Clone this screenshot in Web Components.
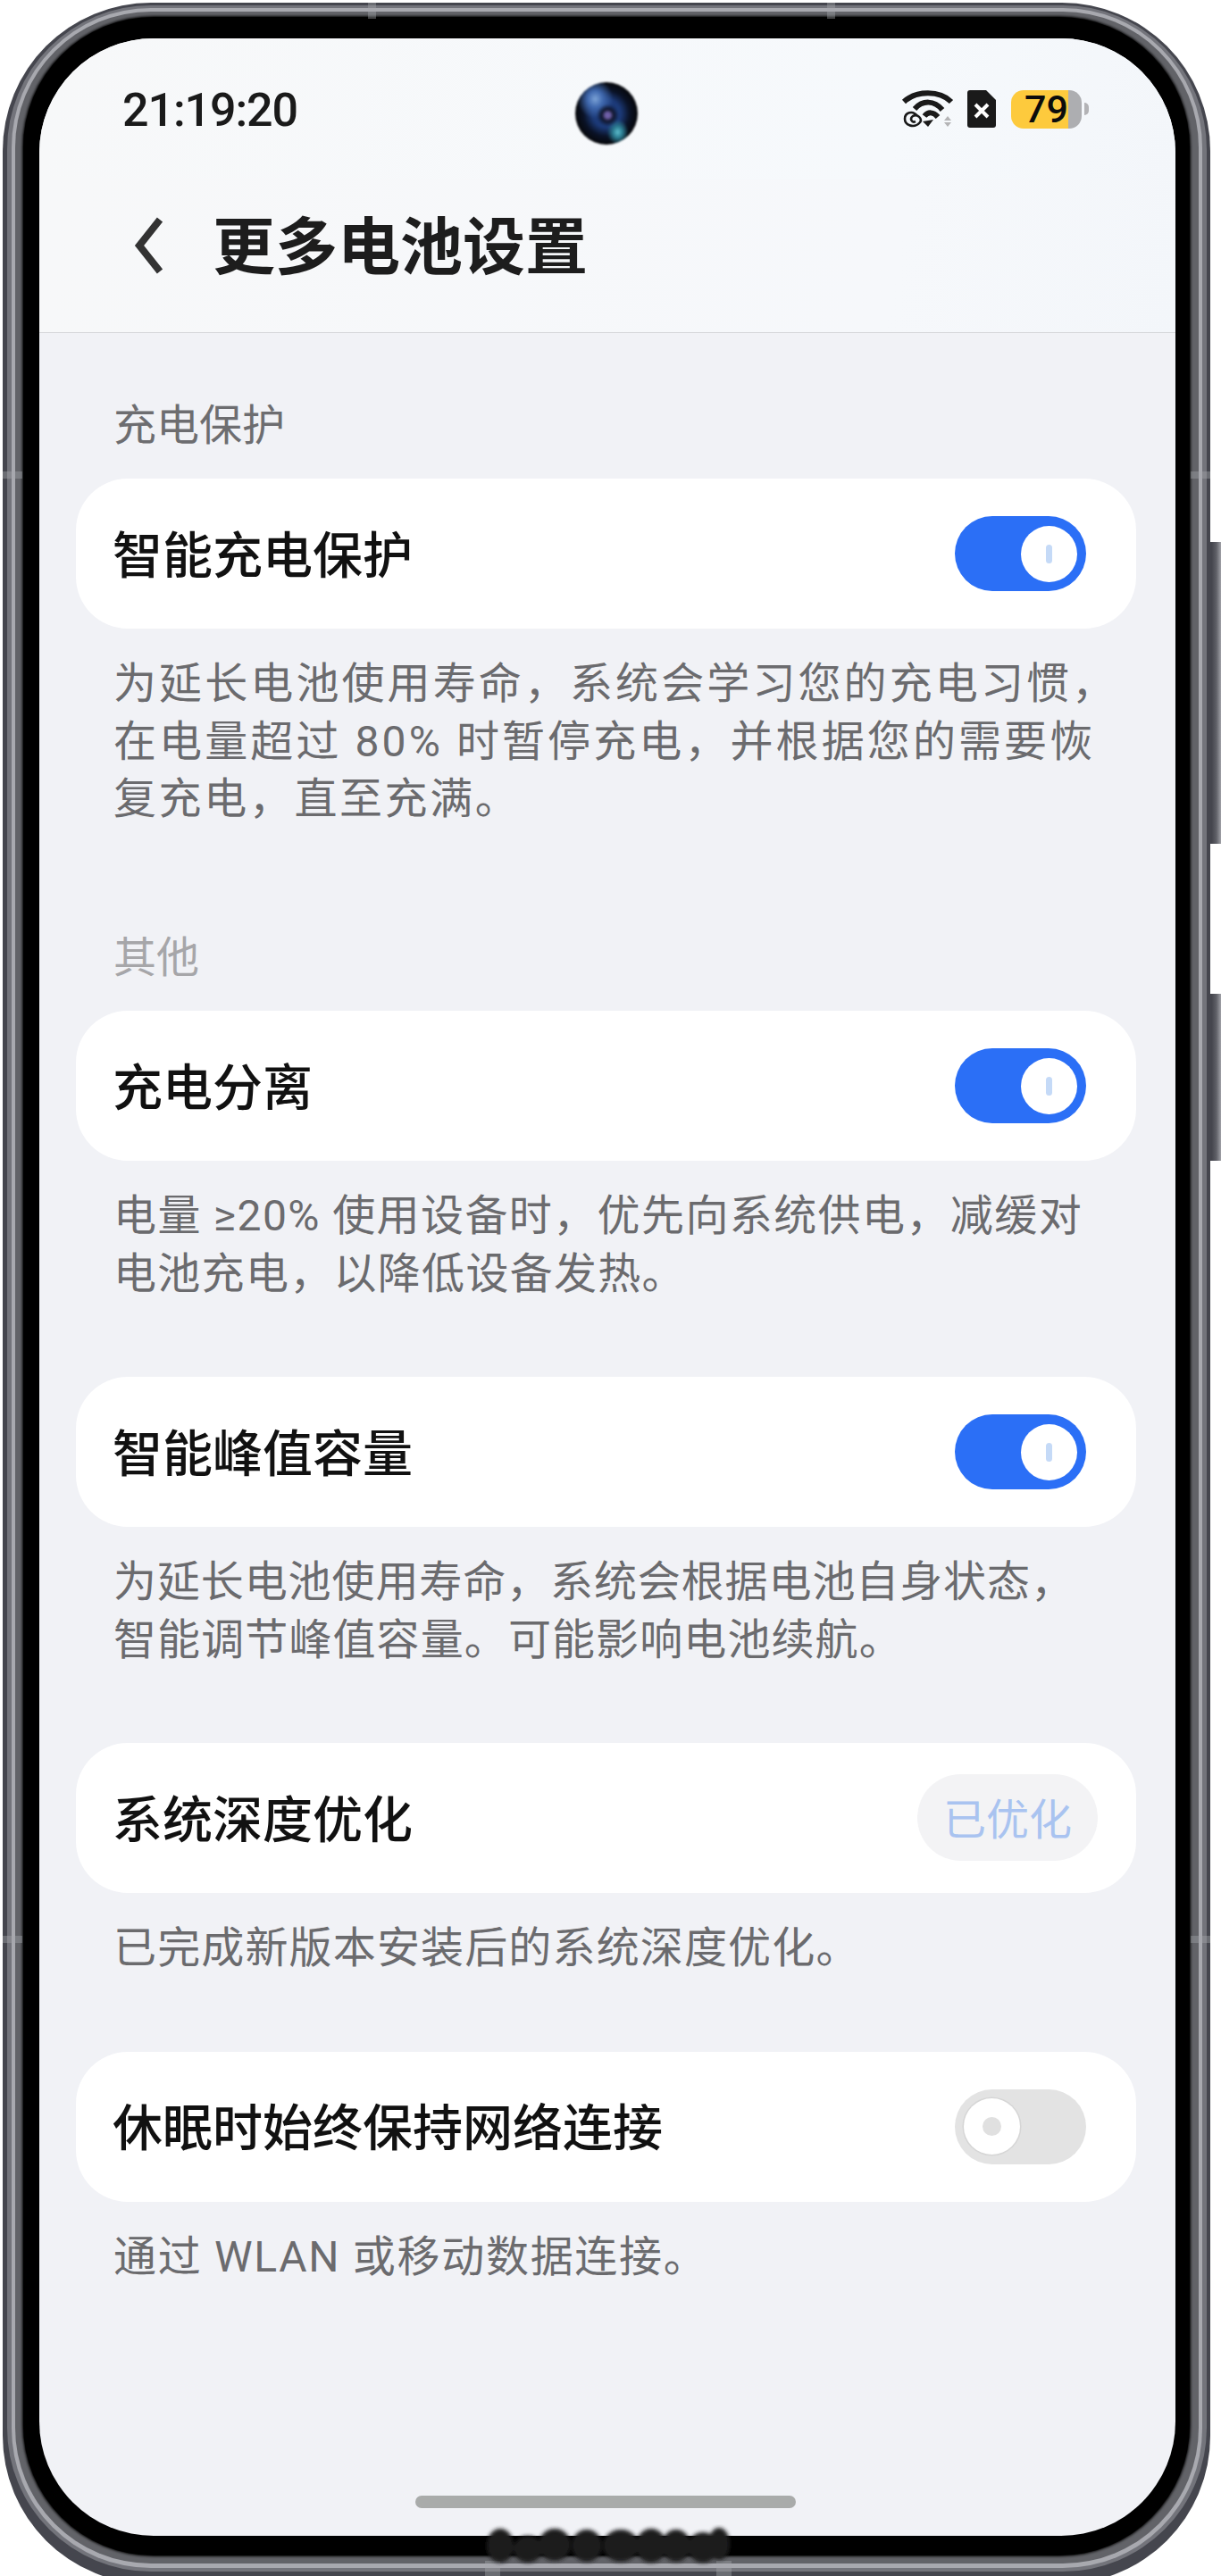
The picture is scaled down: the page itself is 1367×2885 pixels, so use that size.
<!DOCTYPE html>
<html lang="zh">
<head>
<meta charset="utf-8">
<title>更多电池设置</title>
<style>
html, body { margin: 0; background: #fff; }
body { font-family: "Noto Sans CJK SC", "Noto Sans", sans-serif; }
</style>
</head>
<body>
<phone-frame>
  <status-bar time="21:19:20" battery="79"></status-bar>
  <app-header title="更多电池设置"></app-header>
  <settings-list>
    <section-label>充电保护</section-label>
    <setting-row label="智能充电保护"><toggle-switch on></toggle-switch></setting-row>
    <setting-note>
      <note-line style="letter-spacing:3.1px">为延长电池使用寿命，系统会学习您的充电习惯，</note-line>
      <note-line style="letter-spacing:3.1px">在电量超过 80% 时暂停充电，并根据您的需要恢</note-line>
      <note-line style="letter-spacing:2.6px">复充电，直至充满。</note-line>
    </setting-note>
    <section-label class="muted">其他</section-label>
    <setting-row label="充电分离"><toggle-switch on></toggle-switch></setting-row>
    <setting-note>
      <note-line style="letter-spacing:1.4px">电量 ≥20% 使用设备时，优先向系统供电，减缓对</note-line>
      <note-line style="letter-spacing:1.3px">电池充电，以降低设备发热。</note-line>
    </setting-note>
    <setting-row class="next" label="智能峰值容量"><toggle-switch on></toggle-switch></setting-row>
    <setting-note>
      <note-line style="letter-spacing:.9px">为延长电池使用寿命，系统会根据电池自身状态，</note-line>
      <note-line style="letter-spacing:1.1px">智能调节峰值容量。可能影响电池续航。</note-line>
    </setting-note>
    <setting-row class="next" label="系统深度优化"><state-pill>已优化</state-pill></setting-row>
    <setting-note>
      <note-line style="letter-spacing:1.15px">已完成新版本安装后的系统深度优化。</note-line>
    </setting-note>
    <setting-row class="next" label="休眠时始终保持网络连接"><toggle-switch></toggle-switch></setting-row>
    <setting-note>
      <note-line style="letter-spacing:1.7px">通过 WLAN 或移动数据连接。</note-line>
    </setting-note>
  </settings-list>
  <home-bar></home-bar>
</phone-frame>

<script>
class PhoneFrame extends HTMLElement {
    constructor() {
        super();
        this.attachShadow({ mode: "open" });
        this.shadowRoot.innerHTML = `
        <style>
        :host { display: block; position: relative; width: 1367px; height: 2885px; overflow: hidden; background: #fff; }
        .r0 { width: 1352px; margin-left: 3px; margin-top: 3px; box-sizing: border-box; padding: 3px 4px 14px 5px; border-radius: 166px; background: #45464e; position: relative; z-index: 1; }
        .r1 { padding: 3px 5px 4px 5px; border-radius: 161px; background: #73747b; }
        .r2 { padding: 4px 4px 5px 4px; border-radius: 156px; background: #a8a9af; }
        .r3 { padding: 6px 10px 9px 9px; border-radius: 152px; background: #626368; }
        .r4 { padding: 24px 16px 22px 18px; border-radius: 146px; background: #000; box-shadow: 0 0 3px 1px #000; }
        .screen { height: 2797px; border-radius: 128px; overflow: hidden; background: #f1f2f6; display: flex; flex-direction: column; }
        .btn { position: absolute; left: 1350px; width: 17px; border-radius: 5px 0 0 5px / 8px; background: linear-gradient(90deg, #45464e 0 40%, #606168 70%, #a0a1a7); }
        .b1 { top: 607px; height: 338px; }
        .b2 { top: 1113px; height: 187px; }
        .tick { position: absolute; background: #a6a7ad; opacity: .4; z-index: 2; }
        .lens { position: absolute; left: 644px; top: 92px; width: 70px; height: 70px; border-radius: 50%; z-index: 3; filter: blur(1px);
            background:
                radial-gradient(circle at 52% 53%, #6f5fa8 0 5%, #10162c 13%, transparent 24%),
                radial-gradient(ellipse at 32% 27%, #7ba2d6 0, #3f68ae 13%, transparent 30%),
                radial-gradient(ellipse at 68% 80%, #5dbccb 0, #2b7b90 8%, transparent 18%),
                radial-gradient(circle, #1c3a78 0 32%, #0a1226 52%, #050505 74%); }
        svg.port { position: absolute; left: 535px; top: 2824px; z-index: 3; }
        </style>
        <div class="btn b1"></div>
        <div class="btn b2"></div>
        <div class="r0"><div class="r1"><div class="r2"><div class="r3"><div class="r4">
            <div class="screen"><slot></slot></div>
        </div></div></div></div></div>
        <span class="tick" style="left:412px;top:3px;width:9px;height:18px"></span>
        <span class="tick" style="left:926px;top:3px;width:9px;height:18px"></span>
        <span class="tick" style="left:3px;top:528px;width:22px;height:8px"></span>
        <span class="tick" style="left:1333px;top:528px;width:22px;height:8px"></span>
        <span class="tick" style="left:3px;top:2168px;width:22px;height:8px"></span>
        <span class="tick" style="left:1333px;top:2168px;width:22px;height:8px"></span>
        <span class="tick" style="left:543px;top:2868px;width:17px;height:17px"></span>
        <span class="tick" style="left:802px;top:2868px;width:17px;height:17px"></span>
        <div class="lens"></div>
        <svg class="port" width="292" height="52" viewBox="0 0 292 52">
            <defs><filter id="soft"><feGaussianBlur stdDeviation="2"/></filter></defs>
            <g fill="#1b1b1d" filter="url(#soft)">
                <ellipse cx="25" cy="27" rx="15" ry="19"/><ellipse cx="56" cy="31" rx="16" ry="15"/>
                <ellipse cx="86" cy="26" rx="18" ry="18"/><ellipse cx="122" cy="27" rx="17" ry="18"/>
                <ellipse cx="160" cy="27" rx="20" ry="18"/><ellipse cx="194" cy="27" rx="17" ry="19"/>
                <ellipse cx="222" cy="27" rx="16" ry="18"/><ellipse cx="252" cy="29" rx="17" ry="17"/>
                <ellipse cx="270" cy="25" rx="12" ry="18"/>
            </g>
        </svg>`;
    }
}

class StatusBar extends HTMLElement {
    constructor() {
        super();
        this.attachShadow({ mode: "open" });
        this.shadowRoot.innerHTML = `
        <style>
        :host { display: flex; align-items: center; height: 158px; padding: 0 97px 0 93px; background: linear-gradient(100deg, #f7f8f9, #f6f9fc 75%, #f3f6fa); color: #1a1a1a; flex: none; }
        .time { font: 500 52px/1 Roboto, "Noto Sans", sans-serif; letter-spacing: -1.1px; flex: 1; padding-top: 4px; }
        .wifi { margin-right: 7px; }
        .sim { margin-right: 17px; }
        .batt { display: flex; align-items: center; gap: 3px; }
        .cell { width: 79px; height: 43px; border-radius: 14px; display: flex; align-items: center; justify-content: flex-end;
            background: linear-gradient(90deg, #fdca3d 0 64px, #adaeb1 64px); font: 500 43px/43px Roboto, "Noto Sans", sans-serif; color: #0c0c0c; padding-right: 15px; box-sizing: border-box; }
        .nub { width: 5px; height: 14px; background: #b3b3b6; border-radius: 0 7px 7px 0; }
        </style>
        <span class="time"></span>
        <svg class="wifi" width="68" height="44" viewBox="6 30 68 44" fill="none" stroke="#1a1a1a">
            <path d="M10 44 C 24 31, 50 31, 63 44" stroke-width="6"/>
            <path d="M22 52 C 31 42, 44 42, 53 53" stroke-width="6"/>
            <path d="M33 60 C 37 55, 43 55, 48 61" stroke-width="6"/>
            <path d="M37 72 L31 66 L43 64 Z" fill="#1a1a1a" stroke="none"/>
            <path d="M25 60 C 20 53, 11 56, 11 63 C 11 71, 22 74, 28 67 C 31 63, 25 57, 20 60 C 16 63, 19 68, 23 66" stroke-width="2.6"/>
            <path d="M59 60 L63 65 L55 65 Z M55 67 L63 67 L59 72 Z" fill="#b4b4b6" stroke="none"/>
        </svg>
        <svg class="sim" width="32" height="42" viewBox="0 0 32 42">
            <path d="M3 0 H21 L32 11 V39 a3 3 0 0 1 -3 3 H3 a3 3 0 0 1 -3 -3 V3 a3 3 0 0 1 3 -3 Z" fill="#1a1a1a"/>
            <path d="M9 16 L23 30 M23 16 L9 30" stroke="#fff" stroke-width="4"/>
        </svg>
        <div class="batt"><span class="cell"></span><span class="nub"></span></div>`;
    }

    connectedCallback() {
        this.shadowRoot.querySelector(".time").textContent = this.getAttribute("time");
        this.shadowRoot.querySelector(".cell").textContent = this.getAttribute("battery");
    }
}

class AppHeader extends HTMLElement {
    constructor() {
        super();
        this.attachShadow({ mode: "open" });
        this.shadowRoot.innerHTML = `
        <style>
        :host { display: flex; align-items: center; gap: 55px; height: 148px; padding: 0 0 23px 106px; background: linear-gradient(100deg, #f7f8f9, #f6f8fb 75%, #f3f6fa); border-bottom: 1px solid #d5d6d9; flex: none; }
        h1 { margin: 0 0 6px; font: 700 70px/1.2 "Noto Sans CJK SC", sans-serif; color: #1d1d1d; }
        </style>
        <svg width="33" height="64" viewBox="0 0 33 64" fill="none"><path d="M29 3 L6 32 L29 61" stroke="#333" stroke-width="8"/></svg>
        <h1></h1>`;
    }

    connectedCallback() {
        this.shadowRoot.querySelector("h1").textContent = this.getAttribute("title");
    }
}

class SettingsList extends HTMLElement {
    constructor() {
        super();
        this.attachShadow({ mode: "open" });
        this.shadowRoot.innerHTML = `
        <style>
        :host { display: flex; flex-direction: column; padding: 70px 44px 0 41px; flex: 1; }
        ::slotted(section-label.muted) { margin-top: 112.5px; color: #a6a6a9; }
        ::slotted(setting-row.next) { margin-top: 84px; }
        </style>
        <slot></slot>`;
    }
}

class SectionLabel extends HTMLElement {
    constructor() {
        super();
        this.attachShadow({ mode: "open" });
        this.shadowRoot.innerHTML = `
        <style>
        :host { display: block; padding: 0 0 5px 42px; margin-bottom: 29px; font: 400 48px/59px "Noto Sans CJK SC", sans-serif; color: #6d6d70; }
        </style>
        <slot></slot>`;
    }
}

class SettingRow extends HTMLElement {
    constructor() {
        super();
        this.attachShadow({ mode: "open" });
        this.shadowRoot.innerHTML = `
        <style>
        :host { display: flex; align-items: center; justify-content: space-between; height: 168px; box-sizing: border-box; padding: 0 43px 0 41px; background: #fff; border-radius: 58px; }
        .label { font: 500 56px/1.2 "Noto Sans CJK SC", sans-serif; color: #111; margin-bottom: 5px; }
        </style>
        <span class="label"></span>
        <slot></slot>`;
    }

    connectedCallback() {
        this.shadowRoot.querySelector(".label").textContent = this.getAttribute("label");
    }
}

class SettingNote extends HTMLElement {
    constructor() {
        super();
        this.attachShadow({ mode: "open" });
        this.shadowRoot.innerHTML = `
        <style>
        :host { display: block; padding-left: 42px; margin: 30px 0 -1px; font: 400 48px/64.5px Roboto, "Noto Sans CJK SC", sans-serif; color: #6b6b6e; white-space: nowrap; }
        </style>
        <slot></slot>`;
    }
}

class NoteLine extends HTMLElement {
    constructor() {
        super();
        this.attachShadow({ mode: "open" });
        this.shadowRoot.innerHTML = `
        <style>
        :host { display: block; }
        </style>
        <slot></slot>`;
    }
}

class ToggleSwitch extends HTMLElement {
    constructor() {
        super();
        this.attachShadow({ mode: "open" });
        this.shadowRoot.innerHTML = `
        <style>
        :host { display: flex; align-items: center; width: 147px; height: 84px; margin-right: 13px; box-sizing: border-box; padding: 0 10px; border-radius: 42px; background: #e3e3e3; }
        :host([on]) { background: #2b6ff6; justify-content: flex-end; }
        .knob { display: flex; align-items: center; justify-content: center; width: 63px; height: 63px; border-radius: 50%; background: #fff; box-shadow: 0 0 0 1.5px #d6d6d6; }
        :host([on]) .knob { box-shadow: none; }
        .mark { width: 21px; height: 21px; border-radius: 50%; background: #e0e0e0; }
        :host([on]) .mark { width: 7px; border-radius: 4px; background: #c5daf7; }
        </style>
        <span class="knob"><span class="mark"></span></span>`;
    }
}

class StatePill extends HTMLElement {
    constructor() {
        super();
        this.attachShadow({ mode: "open" });
        this.shadowRoot.innerHTML = `
        <style>
        :host { display: flex; align-items: center; justify-content: center; width: 202px; height: 97px; box-sizing: border-box; padding-bottom: 3px; margin-top: -2px; border-radius: 49px; background: #f3f3f5; font: 400 48px/1 "Noto Sans CJK SC", sans-serif; color: #a9c3f0; }
        </style>
        <slot></slot>`;
    }
}

class HomeBar extends HTMLElement {
    constructor() {
        super();
        this.attachShadow({ mode: "open" });
        this.shadowRoot.innerHTML = `
        <style>
        :host { display: block; flex: none; height: 14px; width: 426px; margin: 0 0 31px 421px; border-radius: 7px; background: #a9abaa; }
        </style>`;
    }
}

customElements.define("phone-frame", PhoneFrame);
customElements.define("status-bar", StatusBar);
customElements.define("app-header", AppHeader);
customElements.define("settings-list", SettingsList);
customElements.define("section-label", SectionLabel);
customElements.define("setting-row", SettingRow);
customElements.define("setting-note", SettingNote);
customElements.define("note-line", NoteLine);
customElements.define("toggle-switch", ToggleSwitch);
customElements.define("state-pill", StatePill);
customElements.define("home-bar", HomeBar);
</script>
</body>
</html>
